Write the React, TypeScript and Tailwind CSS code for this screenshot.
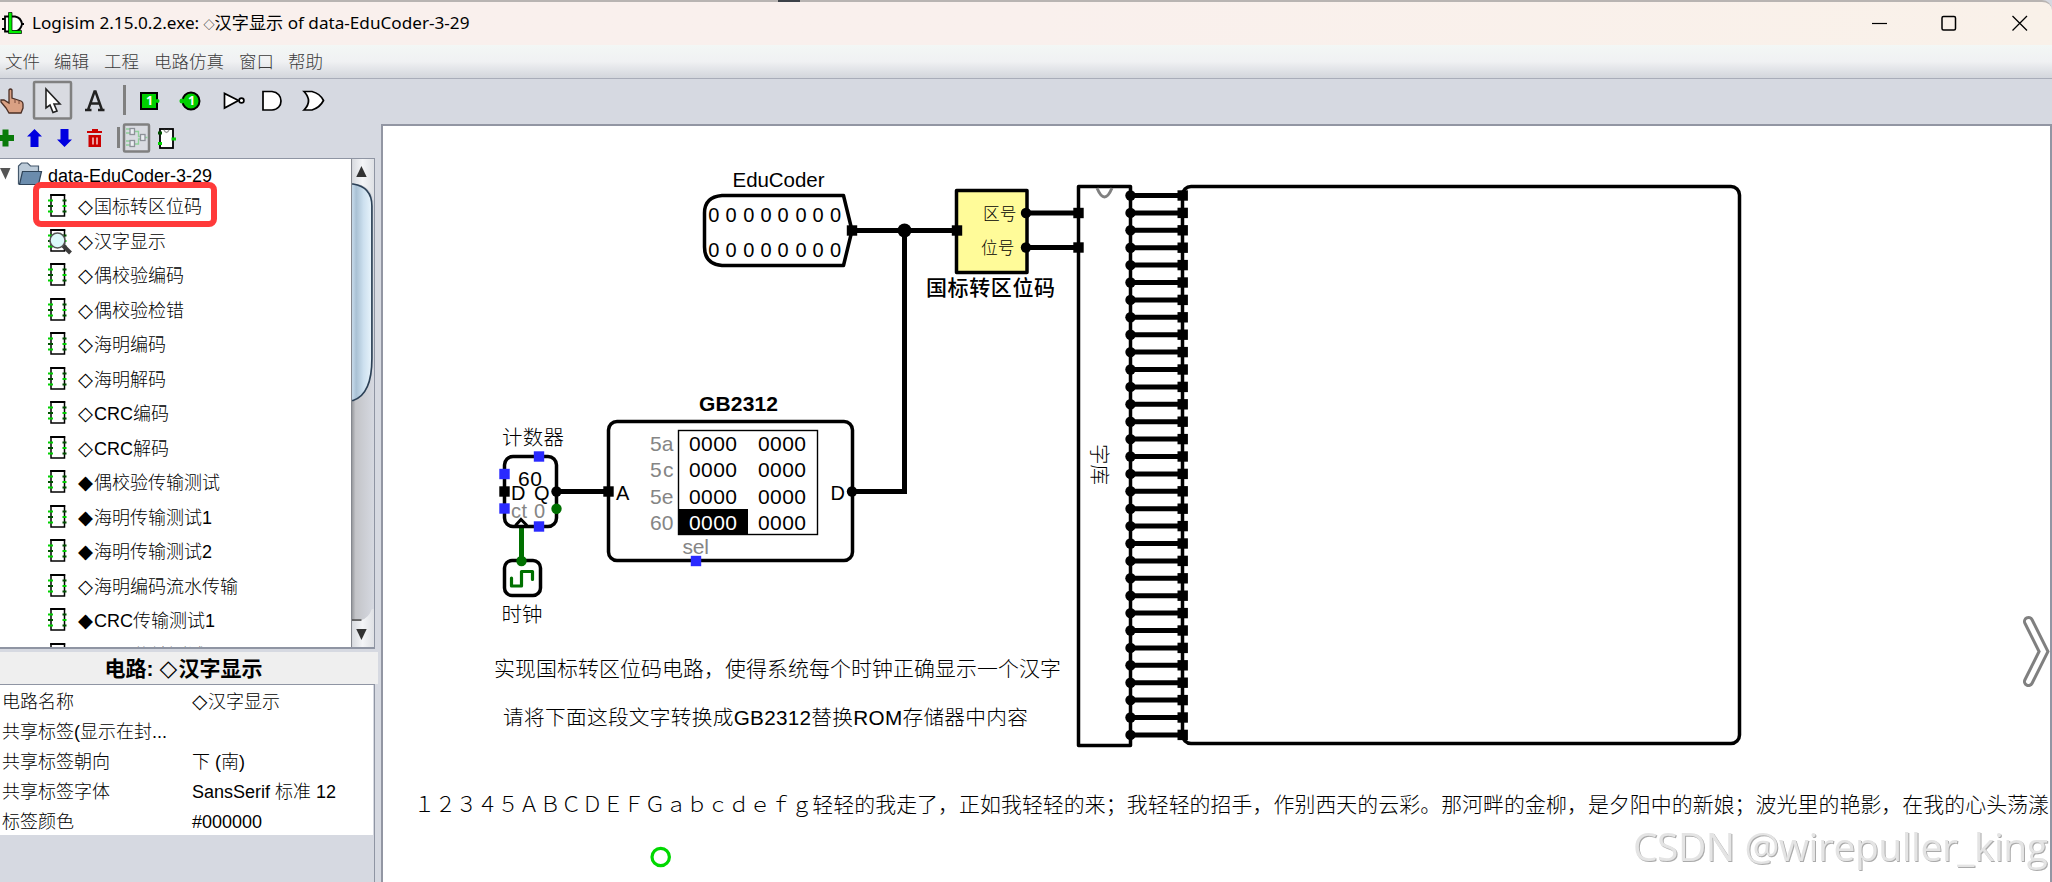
import type { ReactNode } from 'react'

const UI_FONT = "font-['Liberation_Sans','Noto_Sans_CJK_SC',sans-serif]"

const MENUS = [
  { label: '文件', width: 'w-[49px]' },
  { label: '编辑', width: 'w-[50px]' },
  { label: '工程', width: 'w-[50px]' },
  { label: '电路仿真', width: 'w-[85px]' },
  { label: '窗口', width: 'w-[49px]' },
  { label: '帮助', width: 'w-[49px]' },
]

const CIRCUITS = [
  { mark: '◇', name: '国标转区位码' },
  { mark: '◇', name: '汉字显示', viewing: true },
  { mark: '◇', name: '偶校验编码' },
  { mark: '◇', name: '偶校验检错' },
  { mark: '◇', name: '海明编码' },
  { mark: '◇', name: '海明解码' },
  { mark: '◇', name: 'CRC编码' },
  { mark: '◇', name: 'CRC解码' },
  { mark: '◆', name: '偶校验传输测试' },
  { mark: '◆', name: '海明传输测试1' },
  { mark: '◆', name: '海明传输测试2' },
  { mark: '◇', name: '海明编码流水传输' },
  { mark: '◆', name: 'CRC传输测试1' },
  { mark: '◆', name: 'CRC传输测试2' },
]

const ATTRIBUTES = [
  { label: '电路名称', mark: '◇', value: '汉字显示' },
  { label: '共享标签(显示在封...', value: '' },
  { label: '共享标签朝向', value: '下 (南)' },
  { label: '共享标签字体', value: 'SansSerif 标准 12' },
  { label: '标签颜色', value: '#000000' },
]

const ROM_ROWS = [
  { addr: '5a', y: 450.5 },
  { addr: '5c', y: 477 },
  { addr: '5e', y: 503.5 },
  { addr: '60', y: 529.7 },
]

const POEM =
  '１２３４５ＡＢＣＤＥＦＧａｂｃｄｅｆｇ轻轻的我走了，正如我轻轻的来；我轻轻的招手，作别西天的云彩。那河畔的金柳，是夕阳中的新娘；波光里的艳影，在我的心头荡漾'

function TitleBar() {
  return (
    <header className="relative flex h-[45px] shrink-0 items-center rounded-tr-[10px] border-t-2 border-[#b8b4b2] bg-gradient-to-r from-[#f9f0ed] via-[#f9f0ed] to-[#f9f1e9]">
      <div className="absolute -top-[2px] left-[778px] h-[2px] w-[22px] bg-[#3c4148]" />
      <svg className="ml-[2px] h-[24px] w-[24px]" viewBox="0 0 24 24">
        <path d="M3 7h-3M3 17h-3" stroke="#000" strokeWidth="1.800" />
        <path d="M3 4.500h10q6 1 7 7.500-1 6.500-7 7.500H3z" fill="#fff" stroke="#000" strokeWidth="1.800" />
        <path d="M20 12h2" stroke="#000" strokeWidth="2" />
        <path d="M6.500 .5h3.500V18.500H19.500v3H6.500z" fill="#00f000" stroke="#000" strokeWidth="0.700" />
      </svg>
      <h1 className="-mt-[2px] ml-[6px] whitespace-nowrap font-['Noto_Sans','Noto_Sans_CJK_SC',sans-serif] text-[17.150px] leading-none text-black">
        Logisim 2.15.0.2.exe: <span className="text-[11px]">◇</span>汉字显示 of data-EduCoder-3-29
      </h1>
      <svg className="-mt-[2px] mr-[24px] ml-auto h-[16px] w-[156px]" viewBox="0 0 156 16" fill="none" stroke="#000">
        <path d="M0 8.500h15" strokeWidth="1.200" />
        <rect x="70" y="1.500" width="13.500" height="13.500" rx="1.500" strokeWidth="1.500" />
        <path d="M140.500 1l14.500 14.500M155 1l-14.500 14.500" strokeWidth="1.300" />
      </svg>
    </header>
  )
}

function MenuBar() {
  return (
    <nav className="flex h-[34px] shrink-0 items-center border-b border-[#a9adb9] bg-gradient-to-b from-[#f3f7f5] via-[#f0f1f3] to-[#d3d6dc] pt-[3px] pl-[5px]">
      {MENUS.map((m) => (
        <span key={m.label} className={`${m.width} whitespace-nowrap text-[17.500px] font-light leading-none text-[#3b3b3b]`}>
          {m.label}
        </span>
      ))}
    </nav>
  )
}

function Toolbar() {
  return (
    <svg className="h-[41px] w-[340px] shrink-0" viewBox="0 79 340 41">
      {/* poke */}
      <path
        d="M9 90q1.500-2 3 0v8l9 3q2 1 2 3v4l-2 5H9l-3-5-5-6v-2l3 0 5 3z"
        fill="#d9a083"
        stroke="#4b2f25"
        strokeWidth="1.300"
      />
      <path d="M15 99v4M19 101v3" stroke="#7a4b3b" />
      {/* select */}
      <rect x="34" y="82" width="37" height="36.500" rx="1" fill="#d9dbe1" stroke="#808080" strokeWidth="2.500" />
      <path d="M46 89v19l4-3 3 7.500 4-1.500-3-7h6z" fill="#fff" stroke="#222" strokeWidth="1.600" />
      {/* text */}
      <path
        d="M85 110h6.500M98 110h6.500M88 110l6.500-18.500h1l6.500 18.500M90.500 103.500h9"
        fill="none"
        stroke="#222"
        strokeWidth="2.500"
      />
      <path d="M124.500 85v30" stroke="#808080" strokeWidth="3" />
      {/* input and output pins */}
      <rect x="141" y="93" width="16" height="16" fill="#00d000" stroke="#000" strokeWidth="2" />
      <circle cx="157.500" cy="101" r="2" fill="#00d000" />
      <circle cx="191" cy="101" r="8.500" fill="#00d000" stroke="#000" strokeWidth="2" />
      <circle cx="182" cy="101" r="2.500" fill="#00d000" />
      <text x="149.500" y="105.300" textAnchor="middle" className="fill-white font-['Open_Sans',sans-serif] text-[12.500px] font-bold">
        1
      </text>
      <text x="191.500" y="105.300" textAnchor="middle" className="fill-white font-['Open_Sans',sans-serif] text-[12.500px] font-bold">
        1
      </text>
      {/* gates */}
      <g fill="#fff" stroke="#000" strokeWidth="1.700">
        <path d="M224.500 93.500v14.500l14-7.500z" />
        <circle cx="241.500" cy="100.500" r="2.400" />
        <path d="M263 91.500h9c12 1 12 18 0 18.500h-9z" />
        <path d="M304 91.500h8q8 2 11.500 9-3.500 7-11.500 9.500h-8q9-9 0-18.500z" />
      </g>
    </svg>
  )
}

function ExplorerToolbar() {
  return (
    <svg className="h-[38px] w-[200px] shrink-0" viewBox="0 120 200 38">
      <path d="M5.500 129.500v17M-3 138H14" stroke="#0a7a0a" strokeWidth="6" />
      <path d="M34.500 129l7.500 7.500h-3.500V147h-8v-10.500H27z" fill="#0000e0" />
      <path d="M64.500 147l7.500-7.500h-3.500V129h-8v10.500H57z" fill="#0000e0" />
      <path d="M87 131h15v2H87zM92 129h6v2h-6zM88.500 135h12.500v12H88.500z" fill="#cc0000" />
      <path d="M93 137.500v7M97 137.500v7" stroke="#fff" strokeWidth="1.200" />
      <path d="M118.500 127v21" stroke="#808080" strokeWidth="3" />
      <rect x="124" y="124.500" width="25" height="27" rx="1" fill="#d9dbe1" stroke="#808080" strokeWidth="2.500" />
      <path
        d="M126 129h5M126 133h4M126 141h5M126 145h4M134.500 131.500h4v5h3M134.500 144h4v-5h3M145 137.500h2.500"
        fill="none"
        stroke="#8fcf9a"
        strokeWidth="1.300"
      />
      <g fill="#eceef2" stroke="#8d9198" strokeWidth="1.300">
        <rect x="130" y="128.500" width="4.500" height="6" />
        <rect x="130" y="140.500" width="4.500" height="6" />
        <rect x="140.500" y="134.500" width="4.500" height="6" />
      </g>
      <rect x="160" y="129" width="13" height="19" fill="#fff" stroke="#000" strokeWidth="1.800" />
      <path d="M164 130q2.500 5 5 0" fill="none" stroke="#999" strokeWidth="1.500" />
      <path d="M158 133h4" stroke="#005000" strokeWidth="3" />
      <path d="M158 143.500h4M171.500 139h4.500" stroke="#00d000" strokeWidth="3" />
    </svg>
  )
}

function ChipIcon({ viewing }: { viewing?: boolean }) {
  return (
    <svg className="h-[28px] w-[26px] shrink-0" viewBox="0 0 26 28">
      <rect x="3" y="3" width="13.500" height="21" fill="#fff" stroke="#000" strokeWidth="1.500" />
      <path d="M2.200 3h15" stroke="#000" strokeWidth="2" />
      <path d="M0 8.500h5M0 19.500h5M14.500 14h4" stroke="#00d000" strokeWidth="2.200" />
      <path d="M0 14h5M14.500 8.500h4M14.500 19.500h4" stroke="#005000" strokeWidth="2.200" />
      {viewing && (
        <>
          <path d="M14.500 18l8 8" stroke="#3c3c3c" strokeWidth="4" />
          <circle cx="9.500" cy="13.500" r="7.500" fill="#dcfafa" stroke="#555" strokeWidth="1.600" />
        </>
      )}
    </svg>
  )
}

function Mark({ children }: { children: ReactNode }) {
  return <span className="inline-block w-[16px] font-['DejaVu_Sans',sans-serif] text-[19.500px] leading-none">{children}</span>
}

function ScrollBar() {
  return (
    <svg className="h-full w-[23px] shrink-0" viewBox="0 0 22 489" preserveAspectRatio="none">
      <defs>
        <linearGradient id="track">
          <stop offset="0" stopColor="#8d8f94" />
          <stop offset="0.2" stopColor="#c3c4c8" />
          <stop offset="1" stopColor="#d6d9e1" />
        </linearGradient>
        <linearGradient id="thumb">
          <stop offset="0" stopColor="#cfe2f2" />
          <stop offset="0.25" stopColor="#a9c1d4" />
          <stop offset="0.6" stopColor="#cde0ef" />
          <stop offset="1" stopColor="#e8f4fc" />
        </linearGradient>
        <linearGradient id="arrow">
          <stop offset="0" stopColor="#d5d8dd" />
          <stop offset="0.5" stopColor="#f4f5f7" />
          <stop offset="1" stopColor="#dfe1e5" />
        </linearGradient>
      </defs>
      <rect width="22" height="489" fill="url(#track)" />
      <path d="M0 0h22v42Q18 25 3 25H0z" fill="url(#arrow)" />
      <path d="M5 18l5-11 5 11z" fill="#333" />
      <path d="M0 25h2q18 3 18 22v153q0 36-18 42H0z" fill="url(#thumb)" stroke="#2c4157" strokeWidth="1.600" />
      <path d="M0 462h10q7-2 10-11h2v38H0z" fill="url(#arrow)" />
      <path d="M0 462h10" stroke="#444" strokeWidth="1.500" />
      <path d="M5 471l5 11 5-11z" fill="#333" />
      <path d="M.500 0v489" stroke="#85888f" />
    </svg>
  )
}

function ProjectTree() {
  return (
    <div className="mr-[6px] flex h-[491px] shrink-0 border-t-[1.500px] border-r border-b-2 border-[#8f95a3] bg-white">
      <div className="relative flex-1 overflow-hidden">
        <div className="flex h-[30px] items-center">
          <svg className="h-[30px] w-[48px] shrink-0" viewBox="0 159 48 30">
            <path d="M0 168h10.500l-5 11.500z" fill="#555" />
            <path d="M18.500 184v-18l3-3h6l3 3h8v18z" fill="#bccbd9" stroke="#44586c" strokeWidth="1.200" />
            <path d="M19.500 184.500l3-13h19l-3 13z" fill="#6b8cad" stroke="#2f4459" strokeWidth="1.200" />
          </svg>
          <span className="pt-[3px] text-[18px] leading-none">data-EduCoder-3-29</span>
        </div>
        {CIRCUITS.map((c) => (
          <div key={c.name} className="flex h-[34.500px] items-center pl-[48px]">
            <ChipIcon viewing={c.viewing} />
            <span className="ml-[4px] flex items-center pt-[1px] text-[18px] leading-none whitespace-nowrap">
              <Mark>{c.mark}</Mark>
              <span className="pt-px font-light">{c.name}</span>
            </span>
          </div>
        ))}
        {/* highlight round the circuit to edit */}
        <div className="absolute top-[23px] left-[33px] h-[45px] w-[184px] rounded-lg border-[6px] border-[#ff3a3a]" />
      </div>
      <ScrollBar />
    </div>
  )
}

function AttributeTable() {
  return (
    <>
      <h2 className="mt-[3px] mr-[3px] flex h-[32px] shrink-0 items-center justify-center bg-[#efefef] pr-[11px] text-[21px] leading-none font-bold">
        电路:&nbsp;
        <span className="w-[19px] font-['DejaVu_Sans',sans-serif] text-[23px]">◇</span>
        汉字显示
      </h2>
      <div className="mr-[6px] flex-1 border-t border-r border-[#8f95a3]">
        <div className="mr-px bg-white">
          {ATTRIBUTES.map((a) => (
            <div key={a.label} className="flex h-[30px] items-center pt-[3px] text-[18px] leading-none font-light whitespace-nowrap">
              <span className="w-[190px] pl-[2px]">{a.label}</span>
              <span className="flex items-center pl-[2px]">
                {a.mark && <Mark>{a.mark}</Mark>}
                {a.value}
              </span>
            </div>
          ))}
        </div>
      </div>
    </>
  )
}

type LabelProps = { x: number; y: number; w: number; size?: number; children: string; className?: string }

function Label({ x, y, w, size = 20, children, className = '' }: LabelProps) {
  return (
    <text x={x} y={y} textLength={w} fontSize={size} className={className}>
      {children}
    </text>
  )
}

function Port({ x, y, color = '#000' }: { x: number; y: number; color?: string }) {
  return <rect x={x - 5.2} y={y - 5.2} width="10.400" height="10.400" fill={color} />
}

function Canvas() {
  const lines = Array.from({ length: 32 }, (_, i) => 195.5 + i * 17.4)
  return (
    <svg className="h-full w-full" viewBox="383 126 1667 756" preserveAspectRatio="xMinYMin slice">
      {/* wires */}
      <g stroke="#000" strokeWidth="5" fill="none">
        <path d="M852 230.500H957M904.500 230.500V491.500H852M556 491.500H608M1027 213H1078M1027 247.500H1078" />
        {lines.map((y) => (
          <path key={y} d={`M1130 ${y}H1182`} />
        ))}
      </g>
      <path d="M521.500 527v34" stroke="#007000" strokeWidth="5" />

      {/* component bodies */}
      <g fill="#fff" stroke="#000" strokeWidth="3.500" strokeLinejoin="round">
        <path d="M722 195.500H843.500L852 230.500L843.500 265.500H722Q704.500 264 704.500 247V213Q704.500 197 722 195.500z" />
        <rect x="956.500" y="190.500" width="70.500" height="82" fill="#fffb99" />
        <path d="M1130.500 186.500H1078.500V745.500H1130.500z" />
        <rect x="1182.500" y="186.500" width="557" height="557" rx="8.500" />
        <rect x="608.500" y="421.500" width="244" height="139" rx="8.500" />
        <rect x="504.500" y="456.500" width="52" height="70" rx="8.500" />
        <rect x="504.500" y="560.500" width="36" height="35" rx="7.500" />
      </g>
      <path d="M1097 188q7.500 18 15 0" fill="none" stroke="#808080" strokeWidth="3" />

      {/* 16 bit input */}
      <Label x={732.500} y={187} w={92} size={20.500}>EduCoder</Label>
      {[221.5, 256.5].map((y) =>
        [713.7, 731, 748.7, 766, 783, 801, 818, 835.5].map((x) => (
          <text key={`${x}-${y}`} x={x} y={y} textAnchor="middle" fontSize="20">
            0
          </text>
        )),
      )}
      <circle cx="904.500" cy="230.500" r="7" />
      <Port x={852} y={230.5} />
      <Port x={957} y={230.5} />

      {/* converter */}
      <Label x={983} y={219.500} w={33.500} size={16.700} className="font-light">区号</Label>
      <Label x={981} y={253.500} w={33.500} size={16.700} className="font-light">位号</Label>
      <Label x={926} y={294.500} w={129} size={21} className="font-medium">国标转区位码</Label>
      {[213, 247.5].map((y) => (
        <g key={y}>
          <circle cx="1026" cy={y} r="5.200" />
          <Port x={1078.500} y={y} />
        </g>
      ))}

      {/* glyph rom and dot matrix */}
      <text transform="translate(1092 444) rotate(90)" textLength="41" className="text-[20.500px] font-light">
        字库
      </text>
      {lines.map((y) => (
        <g key={y}>
          <circle cx="1130.500" cy={y} r="5.200" />
          <Port x={1182.700} y={y} />
        </g>
      ))}

      {/* rom */}
      <Label x={699} y={410.500} w={79} size={21} className="font-bold">GB2312</Label>
      <rect x="678.500" y="430.500" width="139" height="104" fill="#fff" stroke="#000" strokeWidth="1.400" />
      <rect x="678.500" y="509" width="69.500" height="26" />
      {ROM_ROWS.map((r) => (
        <g key={r.addr}>
          <Label x={650} y={r.y} w={23.500} size={21} className="fill-[#858585]">{r.addr}</Label>
          <Label x={689} y={r.y} w={48} size={21} className={r.addr === '60' ? 'fill-white' : ''}>0000</Label>
          <Label x={758} y={r.y} w={48} size={21}>0000</Label>
        </g>
      ))}
      <Label x={682.500} y={553.500} w={26.500} size={21} className="fill-[#858585]">sel</Label>
      <Label x={616} y={499.500} w={13}>A</Label>
      <Label x={830.500} y={499.500} w={15}>D</Label>
      <Port x={608.500} y={491.500} />
      <circle cx="852" cy="491.500" r="5.200" />
      <Port x={696} y={561} color="#2a2aff" />

      {/* counter */}
      <Label x={502} y={445} w={62} size={20.500} className="font-light">计数器</Label>
      <Label x={518} y={485.500} w={24} size={21}>60</Label>
      <Label x={511} y={499.500} w={15}>D</Label>
      <Label x={534} y={499.500} w={16}>Q</Label>
      <Label x={511} y={517.500} w={16} className="fill-[#858585]">ct</Label>
      <Label x={534} y={517.500} w={11.500} className="fill-[#858585]">0</Label>
      <path d="M515.500 525.500l5.500-6 6 6" fill="none" stroke="#000" strokeWidth="3" />
      <Port x={539} y={456.500} color="#2a2aff" />
      <Port x={504.500} y={474} color="#2a2aff" />
      <Port x={504.500} y={491.500} />
      <Port x={504.500} y={508.500} color="#2a2aff" />
      <Port x={539} y={526.500} color="#2a2aff" />
      <circle cx="556.500" cy="491.500" r="5.200" />
      <circle cx="556.500" cy="508.700" r="5.200" fill="#007000" />

      {/* clock */}
      <circle cx="521.500" cy="561" r="5.200" fill="#007000" />
      <path
        d="M511.500 578v8h10v-14.500h11v8"
        fill="none"
        stroke="#007000"
        strokeWidth="3.200"
        strokeLinecap="round"
        strokeLinejoin="round"
      />
      <Label x={501.500} y={622} w={41} size={20.500} className="font-light">时钟</Label>

      {/* notes */}
      <Label x={494} y={676} w={567} size={20.900} className="font-light">
        实现国标转区位码电路，使得系统每个时钟正确显示一个汉字
      </Label>
      <Label x={503} y={725} w={525} size={20.700} className="font-light">
        请将下面这段文字转换成GB2312替换ROM存储器中内容
      </Label>
      <Label x={414} y={812} w={1635} size={20.900} className="font-light">
        {POEM}
      </Label>
      <circle cx="660.700" cy="857" r="8.700" fill="none" stroke="#00d800" strokeWidth="3.200" />

      {/* next page arrow */}
      <g fill="none" strokeLinecap="round">
        <path d="M2028.500 621.500L2043.500 651.500L2028.500 681.500" stroke="#808080" strokeWidth="11" />
        <path d="M2028.500 621.500L2043.500 651.500L2028.500 681.500" stroke="#fff" strokeWidth="5" />
      </g>
      <Label
        x={1633}
        y={861}
        w={415}
        size={39}
        className="fill-[#e4e4e4] font-['Open_Sans',sans-serif] font-normal [filter:drop-shadow(1px_1px_0.500px_#aaa)]"
      >
        CSDN @wirepuller_king
      </Label>
    </svg>
  )
}

export default function App() {
  return (
    <div className={`${UI_FONT} flex h-[882px] w-[2052px] flex-col overflow-hidden bg-[#d6d9e1] text-black`}>
      <TitleBar />
      <MenuBar />
      <div className="flex min-h-0 flex-1">
        <aside className="flex w-[381px] shrink-0 flex-col">
          <Toolbar />
          <ExplorerToolbar />
          <ProjectTree />
          <AttributeTable />
        </aside>
        <main className="mt-[45px] flex-1 overflow-hidden border-t-2 border-r-2 border-l-2 border-[#9296a3] bg-white">
          <Canvas />
        </main>
      </div>
    </div>
  )
}
